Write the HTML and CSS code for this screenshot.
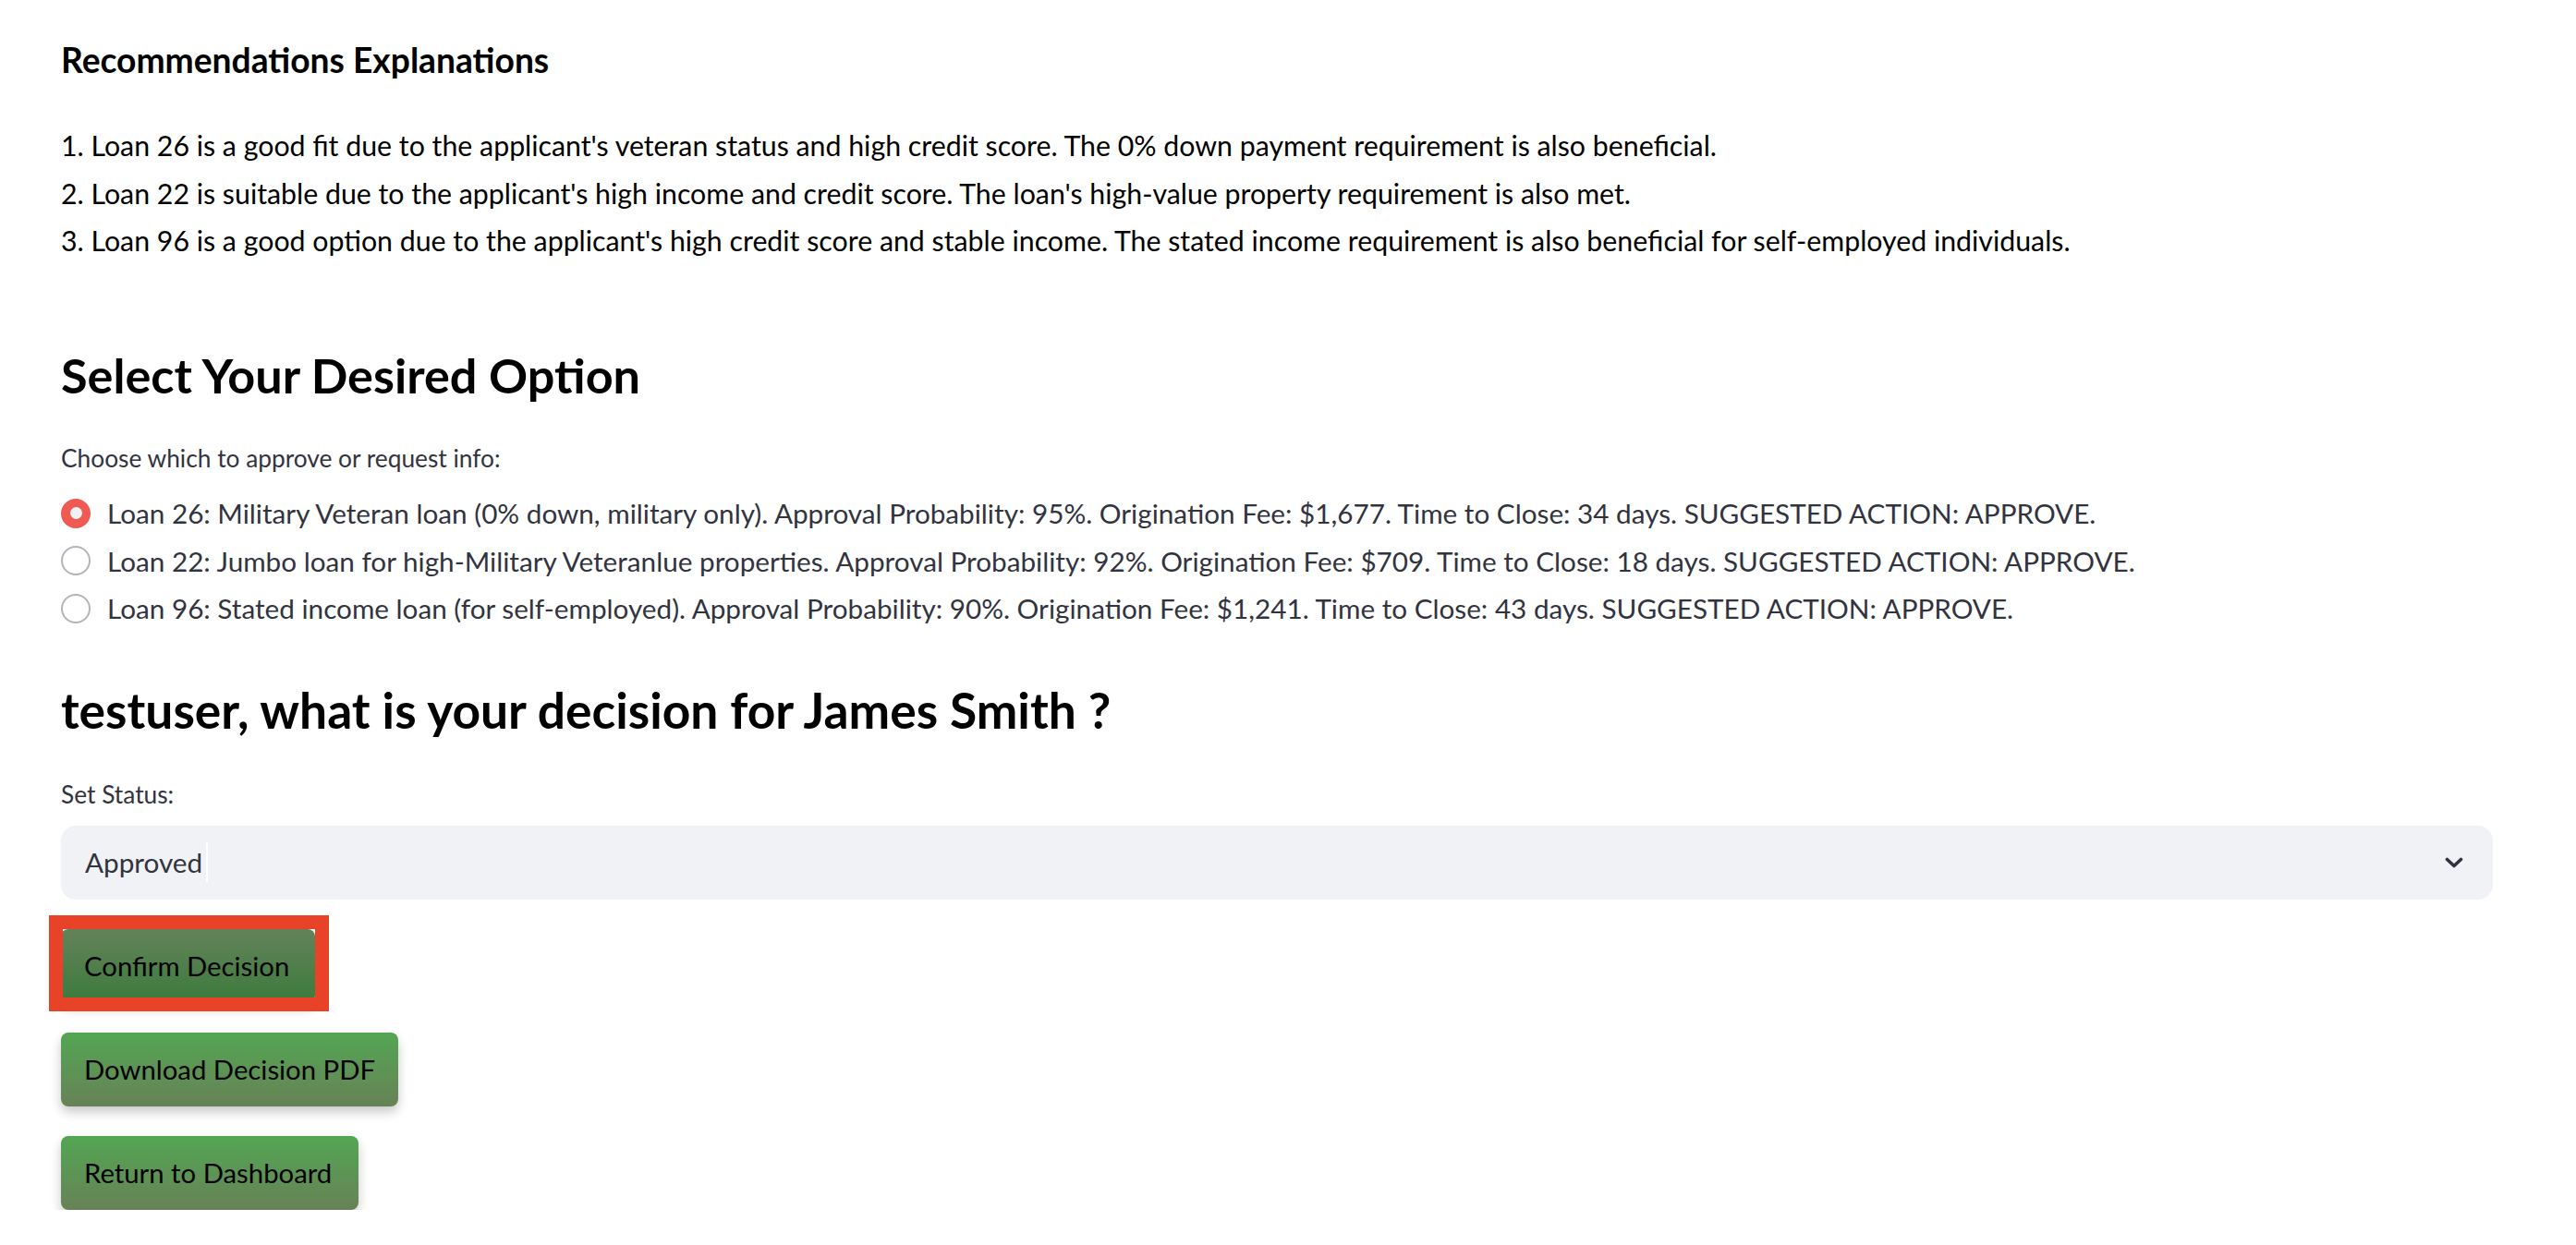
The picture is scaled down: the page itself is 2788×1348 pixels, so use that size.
FILE: index.html
```html
<!DOCTYPE html>
<html lang="en">
<head>
<meta charset="utf-8">
<title>Loan Decision</title>
<link rel="stylesheet" href="styles.css">
</head>
<body>
<main class="page">
  <p class="rec-title">Recommendations Explanations</p>
  <div class="explain">
    <p>1. Loan 26 is a good fit due to the applicant's veteran status and high credit score. The 0% down payment requirement is also beneficial.</p>
    <p>2. Loan 22 is suitable due to the applicant's high income and credit score. The loan's high-value property requirement is also met.</p>
    <p>3. Loan 96 is a good option due to the applicant's high credit score and stable income. The stated income requirement is also beneficial for self-employed individuals.</p>
  </div>

  <h3 class="subheader sub-option">Select Your Desired Option</h3>
  <div class="field-label">Choose which to approve or request info:</div>
  <div class="radio-group">
    <div class="radio-row"><span class="radio radio-on"><span class="radio-dot"></span></span><span>Loan 26: Military Veteran loan (0% down, military only). Approval Probability: 95%. Origination Fee: $1,677. Time to Close: 34 days. SUGGESTED ACTION: APPROVE.</span></div>
    <div class="radio-row"><span class="radio"></span><span>Loan 22: Jumbo loan for high-Military Veteranlue properties. Approval Probability: 92%. Origination Fee: $709. Time to Close: 18 days. SUGGESTED ACTION: APPROVE.</span></div>
    <div class="radio-row"><span class="radio"></span><span>Loan 96: Stated income loan (for self-employed). Approval Probability: 90%. Origination Fee: $1,241. Time to Close: 43 days. SUGGESTED ACTION: APPROVE.</span></div>
  </div>

  <h3 class="subheader sub-decision">testuser, what is your decision for James Smith ?</h3>
  <div class="field-label status-label">Set Status:</div>
  <div class="select">
    <span class="select-value">Approved</span><span class="caret"></span>
    <svg class="chevron" width="20" height="12" viewBox="0 0 20 12"><path d="M2.5 2.5 L10 9.5 L17.5 2.5" fill="none" stroke="#31333F" stroke-width="3.6" stroke-linecap="round" stroke-linejoin="round"/></svg>
  </div>

  <div class="actions">
    <div class="annotated">
      <button class="btn btn-confirm">Confirm Decision</button>
      <span class="highlight"></span>
    </div>
    <button class="btn">Download Decision PDF</button>
    <button class="btn btn-return">Return to Dashboard</button>
  </div>
</main>
</body>
</html>
```

FILE: styles.css
```css
* { box-sizing: border-box; }
html, body { margin: 0; padding: 0; background: #fff; }
body {
  font-family: Lato, "Noto Sans", sans-serif;
  color: #31333F;
}
.page {
  padding: 39px 90px 0 66px;
  display: flex;
  flex-direction: column;
}
.rec-title {
  margin: 0;
  font-size: 37.2px;
  font-weight: 700;
  line-height: 52px;
  color: #000;
}
.explain { margin-top: 41px; }
.explain p {
  margin: 0;
  font-size: 30.3px;
  line-height: 51.6px;
  color: #000;
  white-space: nowrap;
}
.subheader {
  margin: 0;
  font-weight: 700;
  line-height: 70px;
  color: #000;
}
.sub-option {
  margin-top: 84px;
  font-size: 52.2px;
}
.field-label {
  font-size: 26.3px;
  line-height: 40px;
  margin-top: 35px;
  color: #31333F;
}
.radio-group {
  margin-top: 14px;
  display: flex;
  flex-direction: column;
}
.radio-row {
  display: flex;
  align-items: center;
  gap: 18px;
  height: 51.6px;
  font-size: 29.7px;
  white-space: nowrap;
  color: #31333F;
}
.radio {
  width: 32px;
  height: 32px;
  border-radius: 50%;
  border: 2px solid #B3B4B9;
  background: #fff;
  flex: none;
  display: flex;
  align-items: center;
  justify-content: center;
}
.radio-on {
  border: none;
  background: #EF5A53;
}
.radio-dot {
  width: 13px;
  height: 13px;
  border-radius: 50%;
  background: #F0F2F6;
}
.sub-decision {
  margin-top: 48px;
  font-size: 53.3px;
}
.status-label { margin-top: 37px; }
.select {
  margin-top: 14px;
  height: 80px;
  background: #F0F2F6;
  border-radius: 16px;
  display: flex;
  align-items: center;
  padding: 0 32px 0 26px;
  font-size: 29.7px;
  color: #31333F;
}
.caret {
  width: 2px;
  height: 43px;
  background: #fff;
  margin-left: 4px;
}
.chevron { margin-left: auto; }
.actions {
  margin-top: 32px;
  display: flex;
  flex-direction: column;
  align-items: flex-start;
  gap: 32px;
}
.annotated { position: relative; }
.btn {
  height: 80px;
  padding: 0 25px;
  border: none;
  border-radius: 8px;
  font-family: inherit;
  font-size: 29.3px;
  color: #000;
  background: linear-gradient(to bottom, #53A653, #678256);
  box-shadow: 0 6px 12px rgba(0, 0, 0, 0.22);
  cursor: pointer;
}
.btn-confirm {
  padding: 0 28px 0 25px;
  background: linear-gradient(to bottom, #64825A, #3C7B3C);
}
.btn-return { padding: 0 29px 0 25px; }
.highlight {
  position: absolute;
  left: -13px;
  right: -15px;
  top: -15px;
  bottom: -9px;
  border: 15px solid #E84228;
}
```
